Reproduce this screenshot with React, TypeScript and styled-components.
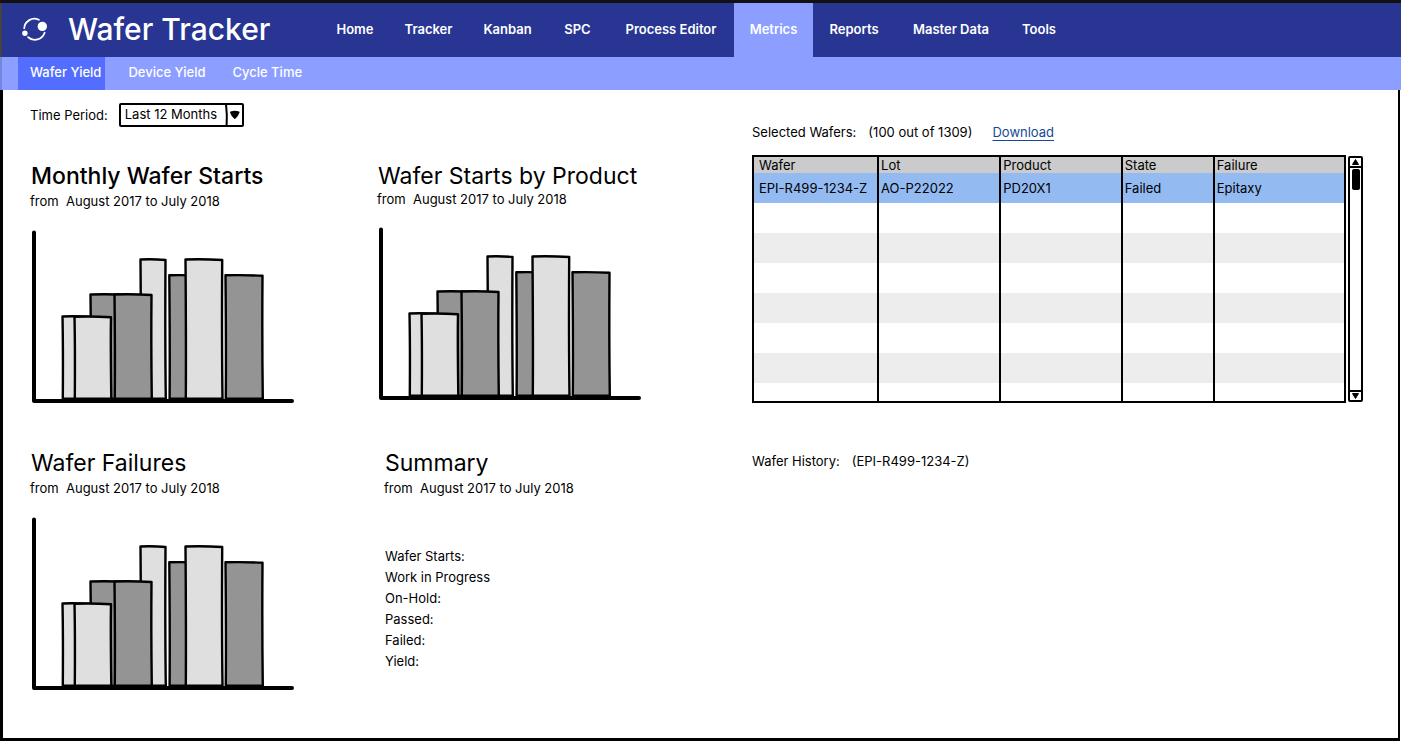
import React from 'react';
import styled, { createGlobalStyle, css } from 'styled-components';

const GlobalStyle = createGlobalStyle`
  *, *::before, *::after { box-sizing: border-box; }
  body {
    margin: 0;
    background: #fff;
    color: #000;
    font: 400 13px/18px Inter, "Open Sans", sans-serif;
  }
`;

const Page = styled.div`
  display: flex;
  flex-direction: column;
  min-height: 100vh;
  border-top: 3px solid #111;
`;

const Header = styled.header`
  display: flex;
  height: 54px;
  padding-left: 20px;
  background: #283593;
  border-left: 2px solid #444;
  color: #fff;
`;

const Brand = styled.div`
  display: flex;
  align-items: center;
  gap: 20px;
  width: 299px;
  flex-shrink: 0;
  padding-bottom: 2px;
`;

const BrandName = styled.h1`
  margin: 0;
  font-size: 30px;
  line-height: 36px;
  font-weight: 500;
  white-space: nowrap;
`;

const MainNav = styled.nav`
  display: grid;
  grid-template-columns: 68px 79px 79px 61px 126px 79px 82px 112px 64px;
`;

const NavLink = styled.a<{ $active?: boolean }>`
  display: flex;
  align-items: center;
  justify-content: center;
  padding-bottom: 2px;
  background: ${(p) => (p.$active ? '#8c9eff' : 'transparent')};
  color: #fff;
  font-weight: 600;
  text-decoration: none;
  white-space: nowrap;
`;

const SubNav = styled.nav`
  display: flex;
  gap: 11px;
  height: 33px;
  padding-left: 16px;
  background: #8c9eff;
  border-left: 2px solid #7485dd;
`;

const SubLink = styled.a<{ $active?: boolean }>`
  display: flex;
  align-items: center;
  padding: 0 4px 3px 12px;
  background: ${(p) => (p.$active ? '#536dfe' : 'transparent')};
  color: #fff;
  font-weight: 500;
  text-decoration: none;
  white-space: nowrap;
`;

const Content = styled.main`
  flex: 1;
  display: grid;
  grid-template-columns: minmax(0, 722fr) minmax(0, 611fr);
  margin-right: 1px;
  padding: 0 35px 40px 27px;
  border: solid #000;
  border-width: 0 2px 3px 3px;
`;

const FilterRow = styled.div`
  display: flex;
  align-items: center;
  gap: 11px;
  padding-top: 13px;
`;

const SelectBox = styled.div`
  position: relative;
  width: 125px;
  height: 24px;
`;

const Select = styled.select`
  appearance: none;
  width: 100%;
  height: 100%;
  padding: 0 20px 2px 4px;
  border: 2px solid #000;
  border-radius: 2px;
  background: #fff;
  color: #000;
  font: inherit;
`;

const SelectArrow = styled.svg`
  position: absolute;
  top: 0;
  right: 0;
  pointer-events: none;
`;

const Panels = styled.div`
  display: grid;
  grid-template-columns: minmax(0, 347fr) minmax(0, 375fr);
  row-gap: 45px;
  padding-top: 35px;
`;

const ChartSvg = styled.svg`
  display: block;
  margin-top: 18px;
`;

const Panel = styled.section<{ $tight?: boolean; $inset?: boolean }>`
  display: flex;
  flex-direction: column;
  gap: ${(p) => (p.$tight ? 0 : 2)}px;
  padding-left: ${(p) => (p.$inset ? 7 : 0)}px;
  ${ChartSvg} { margin-top: ${(p) => (p.$tight ? 19 : 18)}px; }
`;

const PanelTitle = styled.h2<{ $strong?: boolean }>`
  margin: 0;
  padding-left: 1px;
  font-size: 23px;
  line-height: 28px;
  font-weight: ${(p) => (p.$strong ? 500 : 400)};
  white-space: nowrap;
`;

const Period = styled.p`
  margin: 0;
  white-space: pre;
`;

const SummaryList = styled.ul`
  margin: 47px 0 0;
  padding: 0 0 0 1px;
  list-style: none;
  line-height: 21px;
`;

const Wafers = styled.section`
  padding-top: 33px;
`;

const InfoRow = styled.div`
  display: flex;
  gap: 12px;
`;

const Download = styled.a`
  margin-left: 8px;
  color: #144a94;
  text-decoration: underline;
  text-underline-offset: 3px;
`;

const TableArea = styled.div`
  display: flex;
  gap: 2px;
  height: 248px;
  margin: 14px 0 49px;
`;

const TableFrame = styled.div`
  flex: 1;
  overflow: hidden;
  border: 2px solid #000;
`;

const Table = styled.table`
  width: 100%;
  table-layout: fixed;
  border-spacing: 0;
`;

const cell = css`
  padding: 0 0 0 2px;
  text-align: left;
  font-weight: 400;
  white-space: nowrap;
  border-right: 2px solid #000;
  &:first-child { padding-left: 5px; }
  &:last-child { border-right: 0; }
`;

const Th = styled.th`
  ${cell}
  height: 16px;
  line-height: 16px;
  background: #cbcbcb;
`;

const Td = styled.td`
  ${cell}
  height: 30px;
`;

const Row = styled.tr<{ $selected?: boolean }>`
  background: #fff;
  &:nth-child(odd) { background: #ededed; }
  ${(p) => p.$selected && css`&&:nth-child(odd) { background: #94baf2; }`}
`;

const Col = styled.col<{ $share: number }>`
  width: ${(p) => p.$share}%;
`;

const ScrollBar = styled.div`
  display: flex;
  flex-direction: column;
  width: 15px;
  height: 246px;
  margin-top: 1px;
  border: 2px solid #000;
  border-radius: 2px;
`;

const ScrollButton = styled.button<{ $down?: boolean }>`
  display: block;
  height: 10px;
  padding: 0;
  border: solid #000;
  border-width: ${(p) => (p.$down ? '2px 0 0' : '0 0 2px')};
  background: #fff;
  svg { display: block; margin: 0 auto; transform: ${(p) => (p.$down ? 'rotate(180deg)' : 'none')}; }
`;

const ScrollTrack = styled.div`
  flex: 1;
  padding: 1px 2px;
`;

const ScrollThumb = styled.div`
  width: 8px;
  height: 21px;
  border-radius: 2px;
  background: #000;
`;

const Logo = () => (
  <svg width="26" height="24" viewBox="0 0 26 24" fill="none" aria-hidden="true">
    <g stroke="#fff" strokeWidth="1.8" strokeLinecap="round">
      <path d="M2.2 11.2A10.2 10.2 0 0 1 16.8 2.8" />
      <path d="M6.2 20.2A10.2 10.2 0 0 0 22.6 15.8" />
    </g>
    <circle cx="20.3" cy="9.4" r="4.7" fill="#fff" />
    <circle cx="2.9" cy="16.2" r="2.7" fill="#fff" />
  </svg>
);

const LIGHT = '#dfdfdf';
const DARK = '#949494';

const BARS = [
  { x: 110.5, right: 135.5, top: 29.5, fill: LIGHT },
  { x: 60.5, right: 100, top: 64.5, fill: DARK },
  { x: 32.5, right: 60, top: 86.5, fill: LIGHT },
  { x: 84.5, right: 121.5, top: 64.5, fill: DARK },
  { x: 44.5, right: 81, top: 86.7, fill: LIGHT },
  { x: 139.3, right: 170, top: 45.3, fill: DARK },
  { x: 155.5, right: 192.2, top: 29.5, fill: LIGHT },
  { x: 195.5, right: 232.5, top: 45.3, fill: DARK },
];

const BarChart = ({ label }: { label: string }) => (
  <ChartSvg width="266" height="174" viewBox="0 0 266 174" role="img" aria-label={label}>
    {BARS.map((b) => (
      <path
        key={b.x}
        d={`M${b.x} ${b.top}Q${(b.x + b.right) / 2} ${b.top - 0.6} ${b.right} ${b.top + 0.5}Q${b.right - 0.5} 110 ${b.right + 0.3} 168.7H${b.x + 0.3}Q${b.x + 0.7} 120 ${b.x} ${b.top}Z`}
        fill={b.fill}
        stroke="#000"
        strokeWidth="2.4"
        strokeLinejoin="round"
      />
    ))}
    <path d="M4 2.5V171H262" fill="none" stroke="#000" strokeWidth="4" strokeLinecap="round" strokeLinejoin="round" />
  </ChartSvg>
);

const Triangle = () => (
  <svg width="9" height="8" viewBox="0 0 9 8" aria-hidden="true">
    <path d="M4.5 1.5L7.5 6.5H1.5Z" stroke="#000" strokeLinejoin="round" />
  </svg>
);

const NAV = ['Home', 'Tracker', 'Kanban', 'SPC', 'Process Editor', 'Metrics', 'Reports', 'Master Data', 'Tools'];
const SUB_NAV = ['Wafer Yield', 'Device Yield', 'Cycle Time'];
const COLUMNS = [
  { name: 'Wafer', share: 21.2 },
  { name: 'Lot', share: 20.7 },
  { name: 'Product', share: 20.6 },
  { name: 'State', share: 15.6 },
  { name: 'Failure', share: 21.9 },
];
const ROWS = [['EPI-R499-1234-Z', 'AO-P22022', 'PD20X1', 'Failed', 'Epitaxy'], ...Array.from({ length: 7 }, () => ['', '', '', '', ''])];
const SUMMARY = ['Wafer Starts:', 'Work in Progress', 'On-Hold:', 'Passed:', 'Failed:', 'Yield:'];
const PERIOD = 'from  August 2017 to July 2018';

export default function App() {
  return (
    <Page>
      <GlobalStyle />
      <Header>
        <Brand>
          <Logo />
          <BrandName>Wafer Tracker</BrandName>
        </Brand>
        <MainNav aria-label="Main">
          {NAV.map((n) => (
            <NavLink key={n} href="#" $active={n === 'Metrics'}>{n}</NavLink>
          ))}
        </MainNav>
      </Header>
      <SubNav aria-label="Metrics">
        {SUB_NAV.map((n) => (
          <SubLink key={n} href="#" $active={n === 'Wafer Yield'}>{n}</SubLink>
        ))}
      </SubNav>
      <Content>
        <div>
          <FilterRow>
            <label htmlFor="period">Time Period:</label>
            <SelectBox>
              <Select id="period" defaultValue="12">
                <option value="12">Last 12 Months</option>
              </Select>
              <SelectArrow width="19" height="24" viewBox="0 0 19 24" aria-hidden="true">
                <path d="M1 1Q2.4 12 1.6 23" fill="none" stroke="#000" strokeWidth="2" />
                <path d="M5.8 9.3Q10 8 13.8 9.3Q12.5 13 9.8 15.2Q7 13 5.8 9.3Z" stroke="#000" strokeWidth="1.6" strokeLinejoin="round" />
              </SelectArrow>
            </SelectBox>
          </FilterRow>
          <Panels>
            <Panel>
              <PanelTitle $strong>Monthly Wafer Starts</PanelTitle>
              <Period>{PERIOD}</Period>
              <BarChart label="Monthly wafer starts" />
            </Panel>
            <Panel $tight>
              <PanelTitle>Wafer Starts by Product</PanelTitle>
              <Period>{PERIOD}</Period>
              <BarChart label="Wafer starts by product" />
            </Panel>
            <Panel>
              <PanelTitle>Wafer Failures</PanelTitle>
              <Period>{PERIOD}</Period>
              <BarChart label="Wafer failures" />
            </Panel>
            <Panel $inset>
              <PanelTitle>Summary</PanelTitle>
              <Period>{PERIOD}</Period>
              <SummaryList>
                {SUMMARY.map((s) => <li key={s}>{s}</li>)}
              </SummaryList>
            </Panel>
          </Panels>
        </div>
        <Wafers>
          <InfoRow>
            <span>Selected Wafers:</span>
            <span>(100 out of 1309)</span>
            <Download href="#">Download</Download>
          </InfoRow>
          <TableArea>
            <TableFrame>
              <Table>
                <colgroup>
                  {COLUMNS.map((c) => <Col key={c.name} $share={c.share} />)}
                </colgroup>
                <thead>
                  <tr>{COLUMNS.map((c) => <Th key={c.name} scope="col">{c.name}</Th>)}</tr>
                </thead>
                <tbody>
                  {ROWS.map((r, i) => (
                    <Row key={i} $selected={i === 0}>
                      {r.map((v, j) => <Td key={j}>{v}</Td>)}
                    </Row>
                  ))}
                </tbody>
              </Table>
            </TableFrame>
            <ScrollBar>
              <ScrollButton type="button" aria-label="Scroll up"><Triangle /></ScrollButton>
              <ScrollTrack><ScrollThumb /></ScrollTrack>
              <ScrollButton type="button" aria-label="Scroll down" $down><Triangle /></ScrollButton>
            </ScrollBar>
          </TableArea>
          <InfoRow>
            <span>Wafer History:</span>
            <span>(EPI-R499-1234-Z)</span>
          </InfoRow>
        </Wafers>
      </Content>
    </Page>
  );
}
